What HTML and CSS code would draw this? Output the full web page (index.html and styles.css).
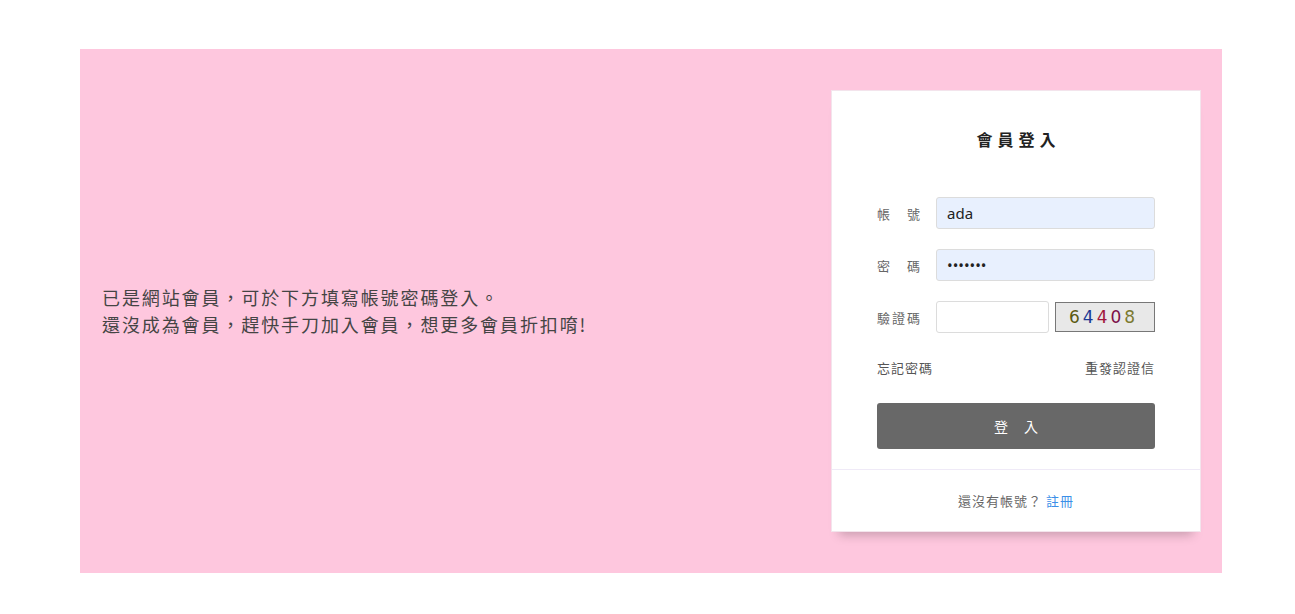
FILE: index.html
```html
<!DOCTYPE html>
<html lang="zh-TW">
  <head>
    <meta charset="utf-8">
    <meta name="viewport" content="width=device-width, initial-scale=1, shrink-to-fit=no">
    <title>會員登入</title>
    <link rel="stylesheet" href="styles.css">
  </head>
  <body>
    <div class="banner">
        <div class="intro">
            <p>已是網站會員，可於下方填寫帳號密碼登入。</p>
            <p>還沒成為會員，趕快手刀加入會員，想更多會員折扣唷!</p>
        </div>
        <div class="login-card">
            <div class="login-body">
                <h2 class="login-title">會員登入</h2>
                <div class="field">
                    <label class="field-label">帳號</label>
                    <input class="field-input filled" type="text" value="ada">
                </div>
                <div class="field">
                    <label class="field-label">密碼</label>
                    <input class="field-input filled" type="password" value="1234567">
                </div>
                <div class="field">
                    <label class="field-label">驗證碼</label>
                    <input class="field-input captcha-input" type="text">
                    <div class="captcha">
                        <span class="c1">6</span><span class="c2">4</span><span class="c3">4</span><span class="c4">0</span><span class="c5">8</span>
                    </div>
                </div>
                <div class="links">
                    <a href="#">忘記密碼</a>
                    <a href="#">重發認證信</a>
                </div>
                <button class="login-btn">登入</button>
            </div>
            <div class="login-foot">
                還沒有帳號？ <a href="#">註冊</a>
            </div>
        </div>
    </div>
  </body>
</html>
```

FILE: styles.css
```css
body {
    margin: 0;
    font-family: "Noto Sans CJK TC", "Noto Sans", sans-serif;
    background: #fff;
}
.banner {
    display: flex;
    justify-content: space-between;
    align-items: center;
    width: 1142px;
    height: 524px;
    margin: 49px 0 0 80px;
    background-color: #fec7de;
    box-sizing: border-box;
    padding-right: 21px;
}
.intro {
    padding-left: 22px;
    color: #444;
    font-size: 18px;
    line-height: 27px;
    letter-spacing: 1.9px;
}
.intro p {
    margin: 0;
}
.login-card {
    flex: 0 0 370px;
    width: 370px;
    background: #fff;
    border: 1px solid #f3e4ec;
    box-sizing: border-box;
    box-shadow: 0 11px 10px -8px rgba(0, 0, 0, .22);
}
.login-body {
    padding: 36px 45px 20px;
}
.login-title {
    margin: 0 0 46px;
    text-align: center;
    font-size: 16px;
    line-height: 24px;
    letter-spacing: 5px;
    text-indent: 5px;
    color: #222;
}
.field {
    display: flex;
    align-items: center;
    height: 32px;
    margin-bottom: 20px;
}
.field-label {
    display: block;
    flex: 0 0 44px;
    width: 44px;
    margin-right: 15px;
    font-size: 13px;
    color: #666;
    white-space: nowrap;
    text-align: justify;
    text-align-last: justify;
    letter-spacing: 1px;
}
.field-input {
    flex: 1 1 auto;
    width: 0;
    min-width: 0;
    height: 32px;
    box-sizing: border-box;
    border: 1px solid #dcdcdc;
    border-radius: 3px;
    padding: 0 10px;
    font-family: "Noto Sans", sans-serif;
    font-size: 15px;
    color: #222;
    background: #fff;
    outline: none;
}
.field-input.filled {
    background: #e8f0fe;
}
.field-input.captcha-input {
    flex: 0 0 113px;
    width: 113px;
    margin-right: 6px;
}
.captcha {
    flex: 1 1 auto;
    height: 30px;
    box-sizing: border-box;
    border: 1px solid #777;
    background: #e8e8e8;
    padding-left: 13px;
    font-family: "DejaVu Sans", sans-serif;
    font-size: 17px;
    line-height: 28px;
    letter-spacing: 3px;
}
.c1 { color: #5c5a10; }
.c2 { color: #1c3a94; }
.c3 { color: #a0143c; }
.c4 { color: #7c1048; }
.c5 { color: #7c7a30; }
.links {
    display: flex;
    justify-content: space-between;
    margin-top: 25px;
    font-size: 13px;
    line-height: 20px;
    letter-spacing: 1px;
}
.links a {
    color: #555;
    text-decoration: none;
}
.login-btn {
    display: block;
    width: 100%;
    height: 46px;
    margin-top: 25px;
    border: none;
    border-radius: 3px;
    background: #686868;
    color: #fff;
    font-family: inherit;
    font-size: 14px;
    letter-spacing: 16px;
    text-indent: 16px;
}
.login-foot {
    border-top: 1px solid #efeaf7;
    height: 61px;
    line-height: 61px;
    text-align: center;
    font-size: 13px;
    color: #666;
    letter-spacing: 1px;
}
.login-foot a {
    color: #3b8fe8;
    text-decoration: none;
}
```
